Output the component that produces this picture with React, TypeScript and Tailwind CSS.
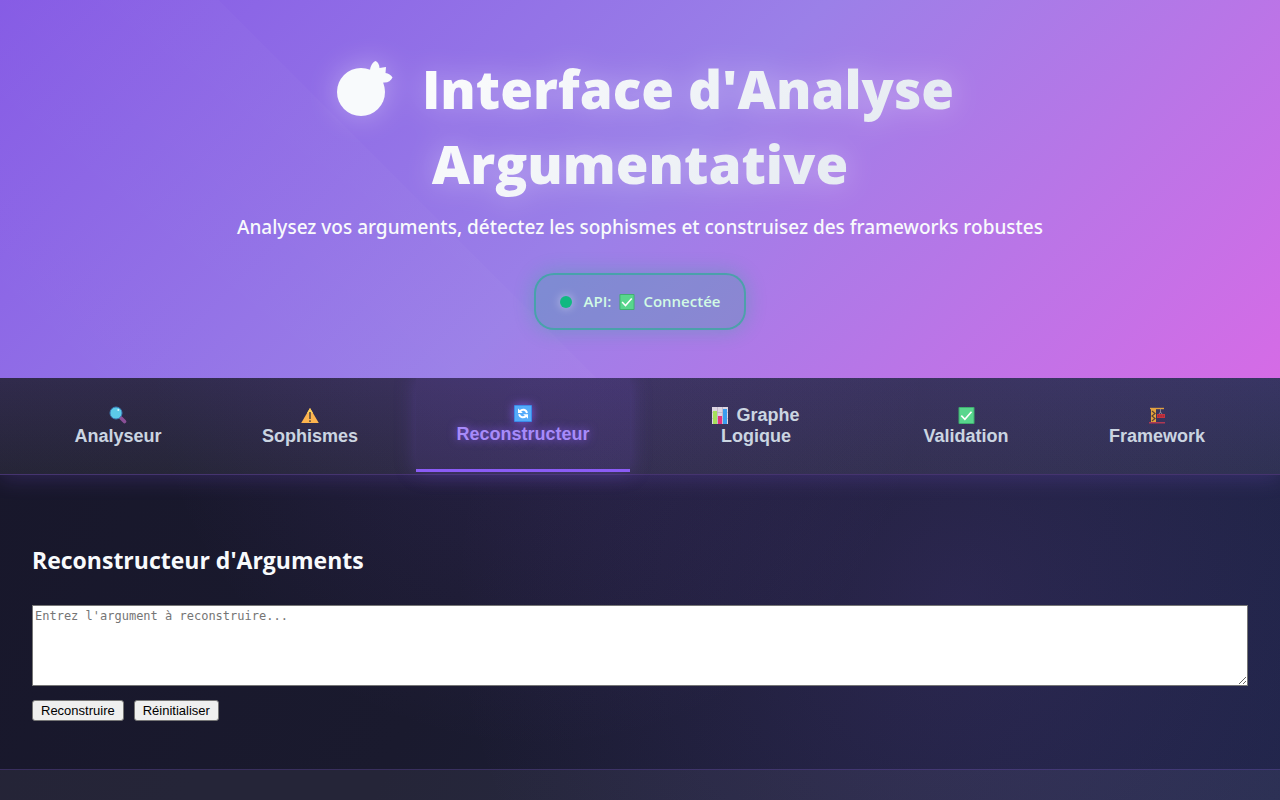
import type { ReactNode } from 'react';

function FruitIcon() {
  return (
    <svg viewBox="0 0 58 58" className="mr-7 ml-2.5 inline-block h-[58px] w-[58px] align-[-8px]" aria-hidden="true">
      <circle cx="25" cy="33" r="24" fill="#f8fafc" />
      <path
        d="M34 12 C34 7 37 3 39.5 2 C42 3 43.5 6 43.5 9 L50 8 L49.5 14 C52.5 14.5 55 16 56.5 18.5 C55 22 51.5 24 47.5 23.5 L42 28 Z"
        fill="#f8fafc"
      />
    </svg>
  );
}

function CheckIcon({ className }: { className: string }) {
  return (
    <svg viewBox="0 0 16 17" className={className} aria-hidden="true">
      <rect width="16" height="17" rx="1" fill="#3fae6f" />
      <rect x="1" y="1" width="14" height="15" fill="#58d68d" />
      <path d="M2.8 8.6 L6.4 12.3 L13 4.8" fill="none" stroke="#fff" strokeWidth="1.6" />
    </svg>
  );
}

function SearchIcon() {
  return (
    <svg viewBox="0 0 18 18" className="h-[18px] w-[18px]" aria-hidden="true">
      <path d="M12 12 L15.5 15.5" stroke="#8a4f96" strokeWidth="3.6" strokeLinecap="round" />
      <circle cx="7" cy="7" r="6" fill="#5ccbe8" stroke="#3d7fb8" strokeWidth="1" />
      <circle cx="9.3" cy="3.9" r="1" fill="#d4f5ff" />
    </svg>
  );
}

function WarningIcon() {
  return (
    <svg viewBox="0 0 18 18" className="h-[18px] w-[18px]" aria-hidden="true">
      <path d="M9 2 L17.8 17 H0.2 Z" fill="#fdb44e" />
      <path d="M9 2 L12 7 H6 Z" fill="#fdd05a" />
      <path d="M9 6 V13 M9 14.2 V16" stroke="#433b3c" strokeWidth="1.4" />
    </svg>
  );
}

function RefreshIcon() {
  return (
    <svg
      viewBox="0 0 18 17"
      className="h-[17px] w-[18px] drop-shadow-[0_0_5px_rgba(139,92,246,0.8)]"
      aria-hidden="true"
    >
      <rect width="18" height="17" rx="1" fill="#3b8be8" />
      <rect x="1" y="1" width="16" height="15" fill="#55abfa" />
      <path
        d="M6 6.4 C8 3.8 12 4.2 13 8 M12 10.8 C10 13.2 6 12.8 5 9.2"
        fill="none"
        stroke="#fff"
        strokeWidth="2"
      />
      <path d="M4 3.4 V8 H8.8 Z M14 13.8 V9.2 H9.2 Z" fill="#fff" />
    </svg>
  );
}

function ChartIcon() {
  return (
    <svg viewBox="0 0 16 17" className="mr-2 inline-block h-[17px] w-4 align-[-3px]" aria-hidden="true">
      <rect width="16" height="17" fill="#ddd5e2" />
      <path d="M0 5.5 H16 M0 11.5 H16 M5.5 0 V17 M10.5 0 V17" stroke="#b9afc2" strokeWidth="0.7" />
      <rect x="1" y="4" width="4" height="13" fill="#a5e05b" />
      <rect x="6" y="9" width="4" height="8" fill="#e5327f" />
      <rect x="11" y="2" width="4" height="15" fill="#3a9df0" />
    </svg>
  );
}

function CraneIcon() {
  return (
    <svg viewBox="0 0 18 18" className="h-[18px] w-[18px]" aria-hidden="true">
      <path d="M2 2.5 H16" stroke="#e0a040" strokeWidth="1.4" />
      <rect x="3" y="3" width="5" height="13" fill="#e3a33c" />
      <path d="M4 5 L7 7.5 L4 10 L7 12.5 L4 15" fill="none" stroke="#5a4038" strokeWidth="1.2" />
      <path d="M12.5 3 V7 M11 8 L12.5 6 L14 8" fill="none" stroke="#8c8798" strokeWidth="0.9" />
      <rect x="9" y="8" width="8" height="4" fill="#c5333f" />
      <path d="M10 10 H16" stroke="#8b2534" strokeWidth="1" strokeDasharray="1.4 1" />
      <path d="M1 16.8 H17" stroke="#cf3a52" strokeWidth="1.2" />
    </svg>
  );
}

function Tab({ icon, active, children }: { icon?: ReactNode; active?: boolean; children: ReactNode }) {
  return (
    <button
      type="button"
      aria-current={active ? 'page' : undefined}
      className={
        active
          ? 'flex h-24 -translate-y-0.5 flex-col items-center justify-center border-b-3 border-[#8b5cf6] bg-[#8b5cf6]/10 pt-0.5 text-[18px] leading-[21px] font-bold text-[#a78bfa] shadow-[0_0_20px_rgba(139,92,246,0.25)] [text-shadow:0_0_10px_rgba(139,92,246,0.8)]'
          : 'flex h-24 flex-col items-center justify-center border-b-3 border-transparent pt-0.5 text-[18px] leading-[21px] font-bold text-[#cbd5e1]'
      }
    >
      {icon && <span className="flex h-[21px] items-center">{icon}</span>}
      <span>{children}</span>
    </button>
  );
}

export default function App() {
  return (
    <div className="flex min-h-screen flex-col overflow-hidden bg-[radial-gradient(circle_at_75%_75%,rgba(150,90,220,0.12),transparent_45%),radial-gradient(circle_at_42%_45%,rgba(139,92,246,0.12),transparent_45%),linear-gradient(115deg,#17162a_0%,#1a1a2e_45%,#1e2447_100%)] font-['Open_Sans','Noto_Sans',sans-serif] text-[#f8fafc]">
      <header className="relative z-10 bg-[linear-gradient(45deg,transparent_0%,rgba(255,255,255,0.02)_36%,transparent_36%),linear-gradient(135deg,#855ae5_0%,#9b80e8_50%,#d56be6_100%)] px-8 pt-[51px] pb-12 text-center">
        <h1 className="mx-auto w-fit max-w-[800px] bg-[linear-gradient(135deg,#ffffff,#e2e8f0)] bg-clip-text text-[53px] leading-[75px] font-extrabold text-transparent drop-shadow-[0_0_15px_rgba(255,255,255,0.35)]">
          <FruitIcon />
          Interface d'Analyse
          <br />
          Argumentative
        </h1>
        <p className="mt-2 font-['Noto_Sans',sans-serif] text-[19px] leading-[36px] font-medium">
          Analysez vos arguments, détectez les sophismes et construisez des frameworks robustes
        </p>
        <div className="mx-auto mt-7 flex h-[57px] w-fit items-center rounded-[20px] border-2 border-[#10b981]/50 bg-[#10b981]/20 px-6 text-[15px] font-semibold text-[#d1fae5] shadow-[0_0_20px_rgba(16,185,129,0.3)]">
          <span className="mr-3 h-3 w-3 rounded-full bg-[#10b981] shadow-[0_0_10px_rgba(255,255,255,0.5)]" />
          <span>API:</span>
          <CheckIcon className="mx-2 h-4 w-4" />
          <span>Connectée</span>
        </div>
      </header>

      <nav className="grid grid-cols-[172fr_180fr_214fr_220fr_168fr_182fr] gap-4 border-b border-[#45346f] bg-[linear-gradient(to_bottom,rgba(139,92,246,0.11),transparent),linear-gradient(rgba(255,255,255,0.06),rgba(255,255,255,0.06))] px-8 font-['Liberation_Sans',Arial,sans-serif] shadow-[0_4px_20px_rgba(139,92,246,0.2)]">
        <Tab icon={<SearchIcon />}>Analyseur</Tab>
        <Tab icon={<WarningIcon />}>Sophismes</Tab>
        <Tab active icon={<RefreshIcon />}>
          Reconstructeur
        </Tab>
        <Tab>
          <ChartIcon />
          Graphe
          <br />
          Logique
        </Tab>
        <Tab icon={<CheckIcon className="h-[17px] w-[17px]" />}>Validation</Tab>
        <Tab icon={<CraneIcon />}>Framework</Tab>
      </nav>

      <main className="px-8 pt-[69px] pb-12">
        <h2 className="text-[23px] leading-[32px] font-bold">
          <label htmlFor="argument">Reconstructeur d'Arguments</label>
        </h2>
        <textarea
          id="argument"
          placeholder="Entrez l'argument à reconstruire..."
          className="mt-[29px] block h-[81px] w-full resize border border-[#767676] bg-white p-0.5 font-['DejaVu_Sans_Mono',monospace] text-[12px] leading-[16px] text-black placeholder:text-[#757575]"
        />
        <div className="mt-3.5 flex gap-2.5 font-['Liberation_Sans',Arial,sans-serif] text-[13px] leading-[15px] text-black">
          <button type="button" className="h-[21px] rounded-[3px] border border-[#767676] bg-[#efefef] px-2">
            Reconstruire
          </button>
          <button type="button" className="h-[21px] rounded-[3px] border border-[#767676] bg-[#efefef] px-2">
            Réinitialiser
          </button>
        </div>
      </main>

      <footer className="min-h-[31px] flex-1 border-t border-[#8b5cf6]/20 bg-white/5" />
    </div>
  );
}
